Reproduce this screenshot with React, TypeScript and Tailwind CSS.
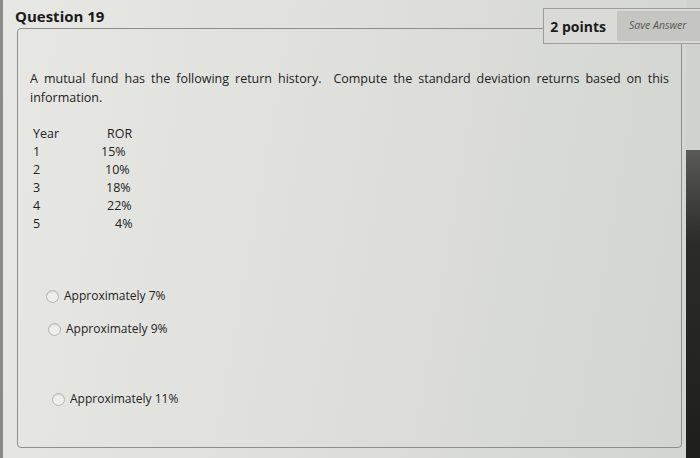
import React from "react";

const rows = [
  { year: "1", ror: "15%", pl: "pl-[0px]" },
  { year: "2", ror: "10%", pl: "pl-[4px]" },
  { year: "3", ror: "18%", pl: "pl-[5px]" },
  { year: "4", ror: "22%", pl: "pl-[6px]" },
  { year: "5", ror: "4%", pl: "pl-[14px]" },
];

const options = [
  { label: "Approximately 7%", cls: "mt-[55px] ml-[16px]" },
  { label: "Approximately 9%", cls: "mt-[17px] ml-[18px]" },
  { label: "Approximately 11%", cls: "mt-[54px] ml-[22px]" },
];

function Radio() {
  return (
    <span className="inline-block h-[13px] w-[13px] shrink-0 rounded-full border border-[#b4b6b1] bg-[#eeefec] shadow-[inset_0_1px_1px_rgba(0,0,0,0.12)]" />
  );
}

export default function App() {
  return (
    <div className="flex h-[458px] w-[700px] overflow-hidden bg-[linear-gradient(100deg,#e7e8e4_0%,#dfe0dc_45%,#d2d4cf_100%)] font-['Open_Sans',sans-serif] text-[#222222]">
      <div className="w-[3px] shrink-0 bg-[#8a8b87]" />
      <div className="relative flex min-w-0 flex-1 flex-col pl-[12px]">
        {/* header */}
        <div className="h-[28px] pt-[6px] text-[15px] font-bold leading-[20px] text-[#1a1a1a]">
          Question 19
        </div>

        <div className="absolute right-[-24px] top-[8px] flex h-[36px] items-center border border-[#9d9e9a] bg-[#dadbd7] pl-[6px]">
          <span className="text-[14px] font-bold text-[#1c1c1c]">2 points</span>
          <span className="ml-[11px] flex h-[30px] w-[92px] items-center justify-start bg-[#c5c6c2] pl-[12px] text-[10.5px] italic text-[#555652]">
            Save Answer
          </span>
        </div>

        {/* panel */}
        <div className="ml-[2px] mr-[4px] h-[420px] rounded-[4px] border border-[#8e8f8b] px-[12px] pt-[40px]">
          <p className="text-justify text-[12.5px] leading-[19px] [word-spacing:2px]">
            A mutual fund has the following return history.&nbsp; Compute the standard deviation returns based on this information.
          </p>

          <div className="mt-[18px] pl-[3px] text-[12.5px] leading-[18px]">
            <div className="flex">
              <span className="w-[74px]">Year</span>
              <span>ROR</span>
            </div>
            {rows.map((r) => (
              <div key={r.year} className="flex">
                <span className="w-[68px]">{r.year}</span>
                <span className={r.pl}>{r.ror}</span>
              </div>
            ))}
          </div>

          <div className="flex flex-col text-[12px] leading-[16px]">
            {options.map((o) => (
              <label key={o.label} className={`flex items-center gap-[5px] ${o.cls}`}>
                <Radio />
                <span>{o.label}</span>
              </label>
            ))}
          </div>
        </div>
      </div>
      <div className="flex w-[14px] shrink-0 flex-col">
        <div className="h-[150px] bg-[#d0d2cd]" />
        <div className="flex-1 bg-[linear-gradient(180deg,#5a5b57_0%,#2b2b29_30%,#1e1e1c_100%)]" />
      </div>
    </div>
  );
}
